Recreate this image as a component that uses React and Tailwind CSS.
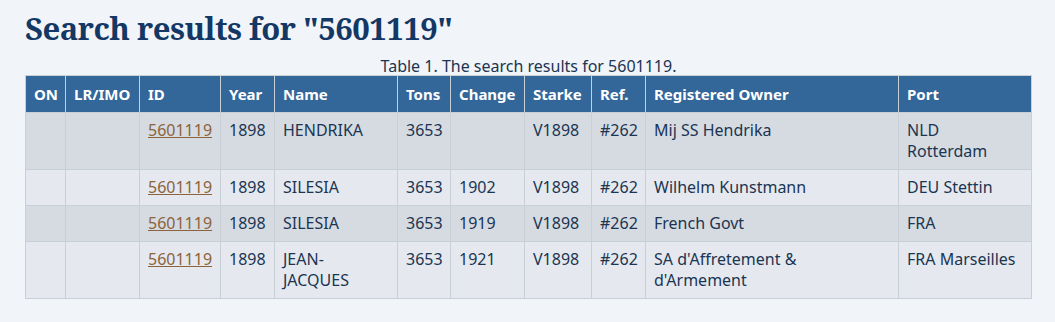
const ROWS = [
  { id: '5601119', year: '1898', name: 'HENDRIKA', tons: '3653', change: '', starke: 'V1898', ref: '#262', owner: 'Mij SS Hendrika', port: 'NLD Rotterdam' },
  { id: '5601119', year: '1898', name: 'SILESIA', tons: '3653', change: '1902', starke: 'V1898', ref: '#262', owner: 'Wilhelm Kunstmann', port: 'DEU Stettin' },
  { id: '5601119', year: '1898', name: 'SILESIA', tons: '3653', change: '1919', starke: 'V1898', ref: '#262', owner: 'French Govt', port: 'FRA' },
  { id: '5601119', year: '1898', name: 'JEAN-JACQUES', tons: '3653', change: '1921', starke: 'V1898', ref: '#262', owner: "SA d'Affretement & d'Armement", port: 'FRA Marseilles' },
]

const COLS = [
  { label: 'ON', w: 'w-[40px]' },
  { label: 'LR/IMO', w: 'w-[74px]' },
  { label: 'ID', w: 'w-[81px]' },
  { label: 'Year', w: 'w-[54px]' },
  { label: 'Name', w: 'w-[123px]' },
  { label: 'Tons', w: 'w-[53px]' },
  { label: 'Change', w: 'w-[74px]' },
  { label: 'Starke', w: 'w-[67px]' },
  { label: 'Ref.', w: 'w-[54px]' },
  { label: 'Registered Owner', w: 'w-[253px]' },
  { label: 'Port', w: 'w-[133px]' },
]

const cell = 'border border-[#c9cfd7] px-2 py-[7px] align-top'

export default function App() {
  return (
    <div className="min-h-[322px] bg-[#f1f4f8] px-[25px] pt-[8px] font-['Noto_Sans',sans-serif] text-[#1b3552]">
      <h1 className="font-['Noto_Serif','DejaVu_Serif',serif] text-[31px] font-bold leading-[40px] tracking-[-0.5px] text-[#143865]">
        Search results for "5601119"
      </h1>
      <table className="mt-[10px] w-[1006px] table-fixed border-collapse text-[16px] leading-[21px]">
        <caption className="h-[17px] leading-[17px] text-[16px] text-[#1b3552]">Table 1. The search results for 5601119.</caption>
        <thead>
          <tr className="bg-[#336699] text-white">
            {COLS.map(c => (
              <th key={c.label} className={`${c.w} border border-[#c9cfd7] px-2 h-[37px] text-left text-[15px] font-bold`}>
                {c.label}
              </th>
            ))}
          </tr>
        </thead>
        <tbody>
          {ROWS.map((r, i) => (
            <tr key={i} className={i % 2 === 0 ? 'bg-[#d6dbe2]' : 'bg-[#e5e9ef]'}>
              <td className={cell}></td>
              <td className={cell}></td>
              <td className={cell}>
                <a href="#" className="text-[#8c633c] underline">{r.id}</a>
              </td>
              <td className={cell}>{r.year}</td>
              <td className={cell}>{r.name}</td>
              <td className={cell}>{r.tons}</td>
              <td className={cell}>{r.change}</td>
              <td className={cell}>{r.starke}</td>
              <td className={cell}>{r.ref}</td>
              <td className={cell}>{r.owner}</td>
              <td className={cell}>{r.port}</td>
            </tr>
          ))}
        </tbody>
      </table>
    </div>
  )
}
